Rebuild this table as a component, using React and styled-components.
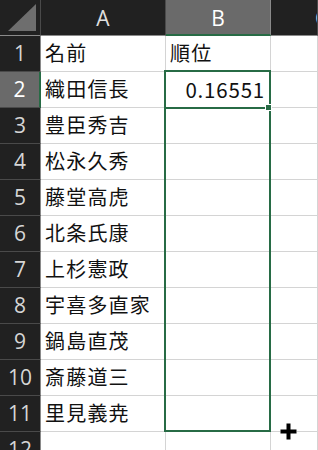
import React from 'react';
import styled, { createGlobalStyle } from 'styled-components';

const GlobalStyle = createGlobalStyle`
  html, body {
    margin: 0;
    padding: 0;
    background: #fff;
  }
  * {
    box-sizing: border-box;
  }
`;

const names = [
  '名前',
  '織田信長',
  '豊臣秀吉',
  '松永久秀',
  '藤堂高虎',
  '北条氏康',
  '上杉憲政',
  '宇喜多直家',
  '鍋島直茂',
  '斎藤道三',
  '里見義尭',
  '',
];

const GREEN = '#276b45';

const Sheet = styled.div`
  position: relative;
  width: 318px;
  height: 450px;
  overflow: hidden;
  display: grid;
  grid-template-columns: 41px 125px 105px 1fr;
  grid-template-rows: 36px;
  grid-auto-rows: 36px;
  font-family: 'Noto Sans CJK JP', 'Noto Sans', sans-serif;
`;

const Corner = styled.div`
  background: #212121;
  border-right: 1px solid #4a4a4a;
  border-bottom: 1px solid #8a8a8a;
  display: flex;
  align-items: flex-end;
  justify-content: flex-end;
  padding: 0 4px 4px 0;
`;

const ColHead = styled.div`
  background: ${(p) => (p.$active ? '#6a6a6a' : '#212121')};
  color: ${(p) => (p.$active ? '#ffffff' : '#e0e0e0')};
  border-right: 1px solid ${(p) => (p.$active ? '#8a8a8a' : '#4a4a4a')};
  border-bottom: ${(p) => (p.$active ? `2px solid ${GREEN}` : '1px solid #8a8a8a')};
  display: flex;
  align-items: center;
  justify-content: center;
  font-family: 'Open Sans', 'Noto Sans', sans-serif;
  font-size: 21px;
  padding-top: ${(p) => (p.$active ? '1px' : '0')};
  white-space: nowrap;
  overflow: hidden;
`;

const CutHead = styled(ColHead)`
  justify-content: flex-start;
  padding-left: 44px;
`;

const RowHead = styled.div`
  background: ${(p) => (p.$active ? '#6a6a6a' : '#212121')};
  color: ${(p) => (p.$active ? '#ffffff' : '#d6d6d6')};
  border-right: ${(p) => (p.$active ? `2px solid ${GREEN}` : '1px solid #8a8a8a')};
  border-bottom: 1px solid #4a4a4a;
  display: flex;
  align-items: center;
  justify-content: center;
  font-family: 'Open Sans', 'Noto Sans', sans-serif;
  font-size: 21px;
  padding-bottom: 2px;
  overflow: hidden;
`;

const Cell = styled.div`
  background: #fff;
  color: #111;
  border-right: 1px solid #d4d4d4;
  border-bottom: 1px solid #d4d4d4;
  display: flex;
  align-items: center;
  justify-content: ${(p) => (p.$num ? 'flex-end' : 'flex-start')};
  padding: 0 ${(p) => (p.$num ? '5px' : '0')} 2px ${(p) => (p.$num ? '0' : '4px')};
  font-size: ${(p) => (p.$num ? '20.5px' : '20px')};
  letter-spacing: ${(p) => (p.$num ? '0.8px' : '1.2px')};
  white-space: nowrap;
  overflow: visible;
`;

// selected range B2:B11 drawn over the grid
const Range = styled.div`
  position: absolute;
  left: 164px;
  top: 70px;
  width: 107px;
  height: 362px;
  border: 2.5px solid ${GREEN};
  pointer-events: none;
`;

const ActiveLine = styled.div`
  position: absolute;
  left: 164px;
  top: 107px;
  width: 105px;
  height: 2px;
  background: ${GREEN};
`;

const FillHandle = styled.div`
  position: absolute;
  left: 265px;
  top: 104px;
  width: 7px;
  height: 7px;
  background: ${GREEN};
  border: 1px solid #fff;
`;

const Cursor = styled.svg`
  position: absolute;
  left: 278px;
  top: 421px;
`;

export default function App() {
  return (
    <>
      <GlobalStyle />
      <Sheet>
        <Corner>
          <svg width="28" height="27" viewBox="0 0 28 27">
            <polygon points="0,27 28,27 28,0" fill="#6e6e6e" />
          </svg>
        </Corner>
        <ColHead>A</ColHead>
        <ColHead $active>B</ColHead>
        <CutHead>C</CutHead>

        {names.map((name, i) => {
          const row = i + 1;
          return (
            <React.Fragment key={row}>
              <RowHead $active={row === 2}>{row}</RowHead>
              <Cell>{name}</Cell>
              <Cell $num={row === 2}>
                {row === 1 ? '順位' : row === 2 ? '0.16551' : ''}
              </Cell>
              <Cell />
            </React.Fragment>
          );
        })}

        <Range />
        <ActiveLine />
        <FillHandle />
        <Cursor width="21" height="21" viewBox="0 0 21 21">
          <path d="M8 2h5v6h6v5h-6v6H8v-6H2V8h6z" fill="#fff" opacity="0.7" />
          <path d="M8.5 2.5h4v6h6v4h-6v6h-4v-6h-6v-4h6z" fill="#000" />
        </Cursor>
      </Sheet>
    </>
  );
}
